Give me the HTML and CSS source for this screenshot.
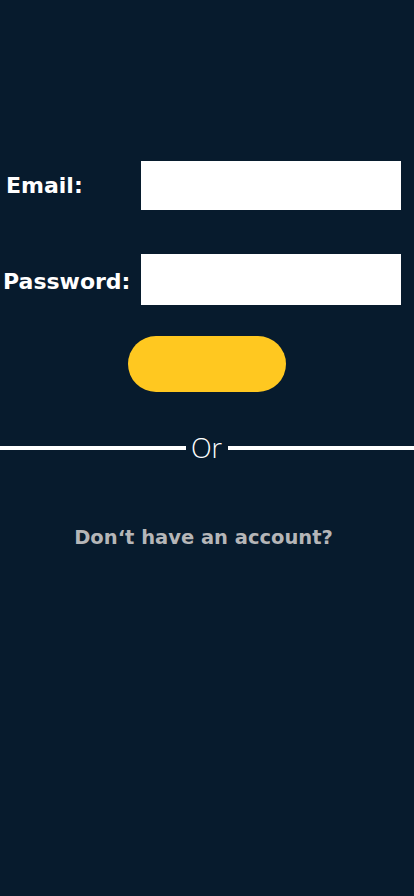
FILE: index.html
```html
<!DOCTYPE html>
<html lang="en">
<head>
<meta charset="utf-8">
<title>Login</title>
<link rel="stylesheet" href="styles.css">
</head>
<body>
<main class="page">
  <form class="login">
    <div class="row row-email">
      <label class="label label-email" for="email">Email:</label>
      <input class="field field-email" id="email" type="email">
    </div>
    <div class="row row-password">
      <label class="label label-password" for="password">Password:</label>
      <input class="field field-password" id="password" type="password">
    </div>
    <div class="actions">
      <button class="submit" type="button"></button>
    </div>
  </form>
  <div class="divider">
    <span class="line"></span>
    <span class="or">Or</span>
    <span class="line"></span>
  </div>
  <p class="signup">Don‘t have an account?</p>
</main>
</body>
</html>
```

FILE: styles.css
```css
* { box-sizing: border-box; }
html, body {
  margin: 0;
  padding: 0;
  background: #071b2d;
  height: 100%;
}
body {
  font-family: "DejaVu Sans", "Liberation Sans", sans-serif;
  color: #ffffff;
}
.page {
  padding-top: 161px;
  min-height: 896px;
}
.login {
  display: flex;
  flex-direction: column;
}
.row {
  display: flex;
  align-items: center;
  padding-right: 13px;
}
.row-email { height: 49px; }
.row-password { height: 51px; margin-top: 44px; }
.label {
  flex: 1;
  font-weight: bold;
  font-size: 22px;
}
.label-email { padding-left: 6px; }
.label-password { padding-left: 3px; padding-top: 3px; }
.field {
  width: 260px;
  height: 100%;
  border: none;
  background: #ffffff;
  border-radius: 0;
  padding: 0 10px;
}
.actions {
  display: flex;
  justify-content: center;
  margin-top: 31px;
}
.submit {
  width: 158px;
  height: 56px;
  border: none;
  border-radius: 28px;
  background: #ffc820;
}
.divider {
  display: flex;
  align-items: center;
  margin-top: 41px;
  height: 30px;
}
.line {
  flex: 1;
  height: 4px;
  background: #ffffff;
}
.or {
  font-size: 27px;
  font-weight: 300;
  padding: 0 6px 0 5px;
  line-height: 30px;
  font-family: "Open Sans", "DejaVu Sans", sans-serif;
}
.signup {
  margin: 63px 0 0;
  padding-right: 7px;
  text-align: center;
  font-size: 19.5px;
  line-height: 24px;
  font-weight: bold;
  color: #b5b6b8;
}
```
